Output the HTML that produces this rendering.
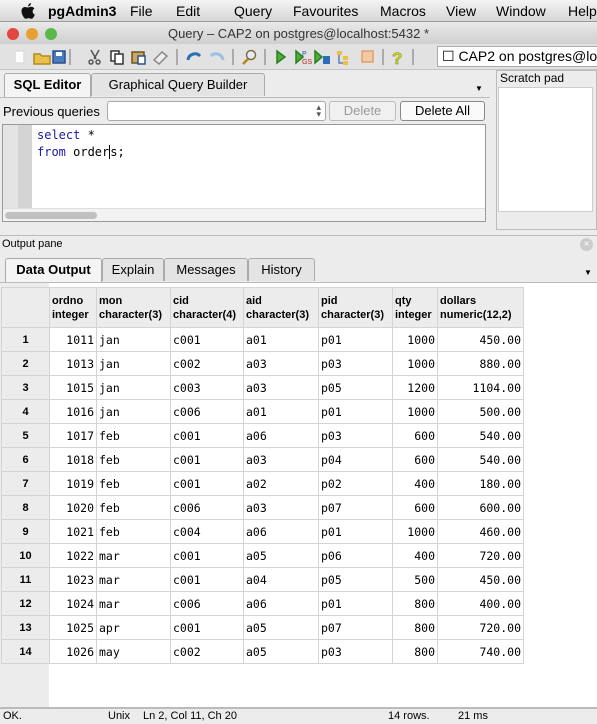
<!DOCTYPE html>
<html><head><meta charset="utf-8"><style>
*{margin:0;padding:0;box-sizing:border-box}
body{width:597px;height:724px;overflow:hidden;background:#ececec;font-family:"Liberation Sans",sans-serif;font-size:13px;color:#000;position:relative}
.a{position:absolute}
.mono{font-family:"DejaVu Sans Mono","Liberation Mono",monospace}
table{border-collapse:collapse;font-size:11.5px;table-layout:fixed;width:522px}
td{border:1px solid #d4d4d4;height:24px;padding:0 2px;white-space:nowrap;overflow:hidden}
.g td.h{background:#ececec;text-align:center;font-weight:bold;font-family:"Liberation Sans",sans-serif;font-size:11px}
.r{text-align:right}
th{background:#ececec;border:1px solid #d4d4d4;text-align:left;font-family:"Liberation Sans",sans-serif;font-size:11px;font-weight:bold;padding:0 2px;line-height:14px;height:40px;vertical-align:middle;white-space:nowrap;overflow:hidden}
.tab{position:absolute;border:1px solid #aaa;border-bottom:none;background:#e4e4e4;font-size:13px;text-align:center;line-height:22px;border-radius:3px 3px 0 0;white-space:nowrap}
</style></head><body>
<!-- menubar -->
<div class="a" style="left:0;top:0;width:597px;height:22px;background:linear-gradient(#f4f4f4,#d6d6d6);border-bottom:1px solid #999;font-size:14px;line-height:22px">
<svg class="a" style="left:20px;top:2px" width="16" height="18" viewBox="0 0 16 18"><path d="M11 1c0 2-1.5 3.5-3 3.5C8 3 9.5 1.2 11 1zM8 5.5c1 0 2-.8 3.2-.8 1.3 0 2.6.8 3.2 1.9-2.6 1.4-2.2 5 .4 6-.6 1.6-1.8 4.2-3.3 4.2-1.1 0-1.5-.7-2.8-.7s-1.8.7-2.8.7C4.2 16.8 1.5 12.6 1.5 9c0-2.6 1.7-4 3.3-4C6 5 7 5.5 8 5.5z" fill="#111"/></svg>
<span class="a" style="left:48px;font-weight:bold">pgAdmin3</span>
<span class="a" style="left:130px">File</span>
<span class="a" style="left:176px">Edit</span>
<span class="a" style="left:234px">Query</span>
<span class="a" style="left:293px">Favourites</span>
<span class="a" style="left:380px">Macros</span>
<span class="a" style="left:446px">View</span>
<span class="a" style="left:496px">Window</span>
<span class="a" style="left:568px">Help</span>
</div>
<!-- title -->
<div class="a" style="left:0;top:23px;width:597px;height:21px;background:linear-gradient(#e8e8e8,#cfcfcf);font-size:13px;line-height:21px;text-align:center;color:#333">Query – CAP2 on postgres@localhost:5432 *</div>
<div class="a" style="left:7px;top:28px;width:12px;height:12px;border-radius:6px;background:#e2463e"></div>
<div class="a" style="left:26px;top:28px;width:12px;height:12px;border-radius:6px;background:#e6a130"></div>
<div class="a" style="left:45px;top:28px;width:12px;height:12px;border-radius:6px;background:#58b84a"></div>
<!-- toolbar -->
<div class="a" style="left:0;top:44px;width:597px;height:26px;background:#e2e2e2;border-bottom:1px solid #c4c4c4"></div>
<svg class="a" style="left:0;top:44px" width="440" height="26">
<g fill="none" stroke-width="1.5">
<rect x="15" y="7" width="9" height="12" fill="#fff" stroke="#ddd"/>
<path d="M34 10h6l2 2h8v8H34z" fill="#e8c04a" stroke="#b08a20"/>
<rect x="53" y="7" width="12" height="12" fill="#4a7cc0" stroke="#2a5090"/><rect x="56" y="8" width="6" height="4" fill="#fff"/>
<line x1="70" y1="5" x2="70" y2="21" stroke="#999"/>
<path d="M91 6l5 9M99 6l-5 9" stroke="#555"/><circle cx="91" cy="18" r="2" stroke="#555"/><circle cx="98" cy="18" r="2" stroke="#555"/>
<rect x="111" y="7" width="8" height="10" fill="#fff" stroke="#333"/><rect x="115" y="10" width="8" height="10" fill="#fff" stroke="#333"/>
<rect x="132" y="8" width="12" height="11" fill="#c9a860" stroke="#6b5320"/><rect x="138" y="12" width="7" height="8" fill="#fff" stroke="#2a5090"/>
<path d="M154 16l8-8 5 4-8 8z" fill="#eee" stroke="#888"/>
<line x1="177" y1="5" x2="177" y2="21" stroke="#999"/>
<path d="M188 16a7 7 0 0 1 12-4" stroke="#2a6fb5" stroke-width="3"/>
<path d="M223 16a7 7 0 0 0-12-4" stroke="#9cc0e4" stroke-width="3"/>
<line x1="233" y1="5" x2="233" y2="21" stroke="#999"/>
<circle cx="251" cy="11" r="4.5" fill="#ddeeff" stroke="#8a6a30"/><path d="M248 15l-5 5" stroke="#b08a20" stroke-width="2.5"/>
<line x1="265" y1="5" x2="265" y2="21" stroke="#999"/>
<path d="M277 7l8 6-8 6z" fill="#4caf3a" stroke="#2a8020"/>
<path d="M296 7l7 6-7 6z" fill="#4caf3a" stroke="#2a8020"/><text x="302" y="12" font-size="7" fill="#2a4fa0">P</text><text x="302" y="20" font-size="7" fill="#c02020">GS</text>
<path d="M315 7l7 6-7 6z" fill="#4caf3a" stroke="#2a8020"/><rect x="323" y="12" width="7" height="8" fill="#2a6fb5"/>
<rect x="337" y="7" width="5" height="4" fill="#e8c04a"/><rect x="343" y="12" width="5" height="4" fill="#e8c04a"/><rect x="343" y="17" width="5" height="4" fill="#e8c04a"/><path d="M339 11v8h4" stroke="#5a80b0"/>
<rect x="362" y="7" width="11" height="11" fill="#f4c8a0" stroke="#e0a070"/>
<line x1="383" y1="5" x2="383" y2="21" stroke="#999"/>
<text x="392" y="20" font-size="17" font-weight="bold" fill="#c8d830" stroke="#8a9a10" stroke-width=".6">?</text>
<line x1="413" y1="5" x2="413" y2="21" stroke="#999"/>
</g></svg>
<div class="a" style="left:437px;top:46px;width:165px;height:21px;background:#fff;border:1px solid #aaa;font-size:14px;line-height:19px;padding-left:4px;white-space:nowrap;overflow:hidden">☐ CAP2 on postgres@localhost</div>
<!-- SQL editor panel -->
<div class="tab" style="left:4px;top:73px;width:87px;background:#f4f4f4;font-weight:bold;height:24px">SQL Editor</div>
<div class="tab" style="left:91px;top:73px;width:174px">Graphical Query Builder</div>
<span class="a" style="left:475px;top:84px;font-size:8px">▼</span>
<div class="a" style="left:0;top:97px;width:490px;height:1px;background:#bbb"></div>
<div class="a" style="left:3px;top:104px;font-size:13px">Previous queries</div>
<div class="a" style="left:107px;top:101px;width:219px;height:20px;background:#fff;border:1px solid #aaa;border-radius:3px"><span class="a" style="right:4px;top:2px;font-size:9px;color:#555;line-height:7px">▴<br>▾</span></div>
<div class="a" style="left:329px;top:101px;width:67px;height:20px;border:1px solid #bbb;border-radius:3px;background:#f0f0f0;color:#999;text-align:center;line-height:18px">Delete</div>
<div class="a" style="left:400px;top:101px;width:85px;height:20px;border:1px solid #888;border-radius:3px;background:#fafafa;text-align:center;line-height:18px">Delete All</div>
<div class="a" style="left:2px;top:124px;width:484px;height:98px;background:#fff;border:1px solid #999"></div>
<div class="a" style="left:3px;top:125px;width:15px;height:83px;background:#e4e4e4"></div>
<div class="a" style="left:18px;top:125px;width:14px;height:83px;background:#d4d4d4"></div>
<div class="a mono" style="left:37px;top:127px;font-size:12px;line-height:17px;color:#000"><span style="color:#1a1aa0">select</span> *<br><span style="color:#1a1aa0">from</span> order<span style="border-left:1px solid #000">s</span>;</div>
<div class="a" style="left:3px;top:208px;width:482px;height:13px;background:#f2f2f2;border-top:1px solid #ddd"></div>
<div class="a" style="left:5px;top:212px;width:92px;height:7px;border-radius:4px;background:#c0c0c0"></div>
<!-- scratch pad -->
<div class="a" style="left:496px;top:70px;width:101px;height:160px;border:1px solid #bbb;background:#ececec"></div>
<div class="a" style="left:500px;top:71px;font-size:12px">Scratch pad</div>
<div class="a" style="left:498px;top:87px;width:95px;height:125px;background:#fff;border:1px solid #ccc"></div>
<!-- output pane -->
<div class="a" style="left:0;top:235px;width:597px;height:1px;background:#bbb"></div>
<div class="a" style="left:2px;top:238px;font-size:11px">Output pane</div>
<div class="a" style="left:580px;top:238px;width:13px;height:13px;border-radius:7px;background:#ccc;color:#fff;font-size:10px;text-align:center;line-height:13px">×</div>
<div class="tab" style="left:5px;top:258px;width:97px;background:#f4f4f4;font-weight:bold;height:24px">Data Output</div>
<div class="tab" style="left:102px;top:258px;width:62px">Explain</div>
<div class="tab" style="left:164px;top:258px;width:84px">Messages</div>
<div class="tab" style="left:248px;top:258px;width:67px">History</div>
<span class="a" style="left:584px;top:268px;font-size:8px">▼</span>
<div class="a" style="left:0;top:282px;width:597px;height:426px;background:#fff;border-top:1px solid #bbb"></div>
<div class="a" style="left:0;top:283px;width:49px;height:425px;background:#ececec"></div>
<table class="a g mono" style="left:1px;top:287px">
<colgroup><col style="width:48px"><col style="width:47px"><col style="width:74px"><col style="width:73px"><col style="width:75px"><col style="width:74px"><col style="width:45px"><col style="width:86px"></colgroup>
<tr><th></th><th>ordno<br>integer</th><th>mon<br>character(3)</th><th>cid<br>character(4)</th><th>aid<br>character(3)</th><th>pid<br>character(3)</th><th>qty<br>integer</th><th>dollars<br>numeric(12,2)</th></tr>
<tr><td class="h">1</td><td class="r">1011</td><td>jan</td><td>c001</td><td>a01</td><td>p01</td><td class="r">1000</td><td class="r">450.00</td></tr>
<tr><td class="h">2</td><td class="r">1013</td><td>jan</td><td>c002</td><td>a03</td><td>p03</td><td class="r">1000</td><td class="r">880.00</td></tr>
<tr><td class="h">3</td><td class="r">1015</td><td>jan</td><td>c003</td><td>a03</td><td>p05</td><td class="r">1200</td><td class="r">1104.00</td></tr>
<tr><td class="h">4</td><td class="r">1016</td><td>jan</td><td>c006</td><td>a01</td><td>p01</td><td class="r">1000</td><td class="r">500.00</td></tr>
<tr><td class="h">5</td><td class="r">1017</td><td>feb</td><td>c001</td><td>a06</td><td>p03</td><td class="r">600</td><td class="r">540.00</td></tr>
<tr><td class="h">6</td><td class="r">1018</td><td>feb</td><td>c001</td><td>a03</td><td>p04</td><td class="r">600</td><td class="r">540.00</td></tr>
<tr><td class="h">7</td><td class="r">1019</td><td>feb</td><td>c001</td><td>a02</td><td>p02</td><td class="r">400</td><td class="r">180.00</td></tr>
<tr><td class="h">8</td><td class="r">1020</td><td>feb</td><td>c006</td><td>a03</td><td>p07</td><td class="r">600</td><td class="r">600.00</td></tr>
<tr><td class="h">9</td><td class="r">1021</td><td>feb</td><td>c004</td><td>a06</td><td>p01</td><td class="r">1000</td><td class="r">460.00</td></tr>
<tr><td class="h">10</td><td class="r">1022</td><td>mar</td><td>c001</td><td>a05</td><td>p06</td><td class="r">400</td><td class="r">720.00</td></tr>
<tr><td class="h">11</td><td class="r">1023</td><td>mar</td><td>c001</td><td>a04</td><td>p05</td><td class="r">500</td><td class="r">450.00</td></tr>
<tr><td class="h">12</td><td class="r">1024</td><td>mar</td><td>c006</td><td>a06</td><td>p01</td><td class="r">800</td><td class="r">400.00</td></tr>
<tr><td class="h">13</td><td class="r">1025</td><td>apr</td><td>c001</td><td>a05</td><td>p07</td><td class="r">800</td><td class="r">720.00</td></tr>
<tr><td class="h">14</td><td class="r">1026</td><td>may</td><td>c002</td><td>a05</td><td>p03</td><td class="r">800</td><td class="r">740.00</td></tr>
</table>
<!-- status -->
<div class="a" style="left:0;top:707px;width:597px;height:17px;background:#ececec;border-top:2px solid #bbb;font-size:11px;line-height:15px">
<span class="a" style="left:3px">OK.</span>
<span class="a" style="left:108px">Unix</span>
<span class="a" style="left:143px">Ln 2, Col 11, Ch 20</span>
<span class="a" style="left:388px">14 rows.</span>
<span class="a" style="left:458px">21 ms</span>
</div>
</body></html>
